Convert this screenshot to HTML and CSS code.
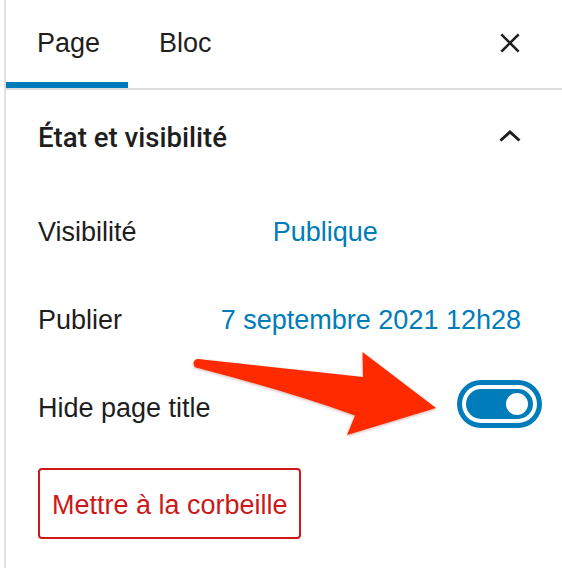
FILE: index.html
```html
<!DOCTYPE html>
<html lang="fr">
<head>
<meta charset="utf-8">
<title>Réglages de la page</title>
<link rel="stylesheet" href="styles.css">
</head>
<body>
<div class="sidebar">
  <div class="tabs">
    <div class="tab active">Page</div>
    <div class="tab">Bloc</div>
    <button class="icon-btn close" aria-label="Fermer">
      <svg viewBox="0 0 24 24" width="24" height="24"><path d="M4 4 L20 20 M20 4 L4 20" stroke="#1e1e1e" stroke-width="2.4" fill="none"/></svg>
    </button>
  </div>
  <div class="panel">
    <div class="panel-title">
      <span class="title-text">État et visibilité</span>
      <svg class="chevron" viewBox="0 0 24 24" width="24" height="24"><polyline points="2.5,16.5 12,8 21.5,16.5" stroke="#1e1e1e" stroke-width="3" fill="none"/></svg>
    </div>
    <div class="panel-body">
      <div class="row">
        <span class="label">Visibilité</span>
        <a class="link">Publique</a>
      </div>
      <div class="row">
        <span class="label">Publier</span>
        <a class="link">7 septembre 2021 12h28</a>
      </div>
      <div class="row">
        <span class="label">Hide page title</span>
        <span class="toggle"><span class="thumb"></span></span>
      </div>
      <div class="actions">
        <button class="trash">Mettre à la corbeille</button>
      </div>
    </div>
  </div>
</div>
<svg class="arrow" viewBox="0 0 562 568" width="562" height="568">
  <path d="M198 359 L363 377 L362.5 352 L436 408 L347 435 L355 415.5 Q290 392 198 368 A4.5 4.5 0 0 1 198 359 Z" fill="#ff2a00"/>
</svg>
</body>
</html>
```

FILE: styles.css
```css
html, body {
  margin: 0;
  padding: 0;
  background: #ffffff;
}
body {
  position: relative;
  width: 562px;
  height: 568px;
  overflow: hidden;
  font-family: "Liberation Sans", Arial, sans-serif;
  font-size: 27px;
  color: #1e1e1e;
}
.sidebar {
  margin-left: 4px;
  border-left: 2px solid #e0e0e0;
  height: 568px;
  box-sizing: border-box;
}
.tabs {
  display: flex;
  align-items: stretch;
  height: 88px;
  border-bottom: 2px solid #dddddd;
}
.tab {
  display: flex;
  align-items: center;
  padding: 0 28px 2px 31px;
  line-height: 30px;
}
.tab.active {
  box-shadow: inset 0 -6px 0 #007cba;
}
.icon-btn {
  border: 0;
  background: none;
  padding: 0;
  display: flex;
  align-items: center;
  justify-content: center;
}
.close {
  margin-left: auto;
  margin-right: 39px;
  width: 26px;
  margin-bottom: 2px;
}
.close svg {
  display: block;
  width: 26px;
  height: 26px;
}
.panel-title {
  display: flex;
  align-items: center;
  justify-content: space-between;
  height: 96px;
  padding: 0 40px 0 32px;
}
.title-text {
  font-family: Roboto, "Liberation Sans", sans-serif;
  font-weight: 500;
  font-size: 27.6px;
  line-height: 30px;
}
.chevron {
  display: block;
  margin-bottom: 5px;
}
.panel-body {
  padding: 2px 29px 0 32px;
}
.row {
  display: flex;
  align-items: center;
  height: 88px;
  line-height: 30px;
}
.label {
  width: 45%;
  flex-shrink: 1;
  white-space: nowrap;
}
.link {
  flex-shrink: 0;
  padding: 0 12px;
  color: #007cba;
  white-space: nowrap;
}
.toggle {
  margin-left: auto;
  margin-bottom: 8px;
  width: 67px;
  height: 30px;
  border-radius: 15px;
  background: #007cba;
  box-shadow: 0 0 0 4px #ffffff, 0 0 0 9px #007cba;
  display: flex;
  align-items: center;
  justify-content: flex-end;
  padding-right: 5px;
  box-sizing: border-box;
}
.thumb {
  width: 22px;
  height: 22px;
  border-radius: 50%;
  background: #ffffff;
}
.actions {
  margin-top: 16px;
}
.trash {
  height: 71px;
  box-sizing: border-box;
  border: 2px solid #cc1818;
  border-radius: 4px;
  background: #ffffff;
  color: #cc1818;
  font-family: "Liberation Sans", Arial, sans-serif;
  font-size: 27px;
  line-height: 30px;
  padding: 3px 11px 0 12px;
}
.arrow {
  position: absolute;
  top: 0;
  left: 0;
  filter: drop-shadow(0 1px 1.5px rgba(120, 20, 0, 0.35));
}
```
